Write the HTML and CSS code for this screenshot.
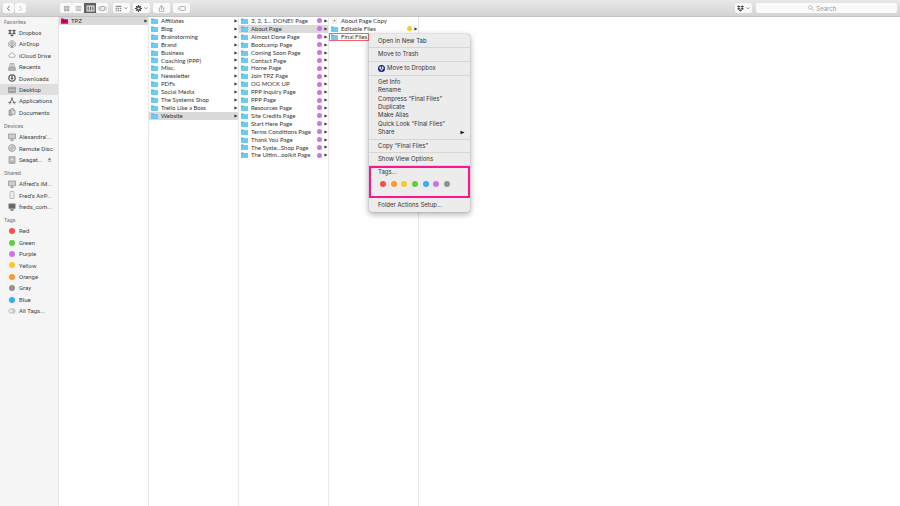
FILE: index.html
```html
<!DOCTYPE html>
<html lang="en">
<head>
  <meta charset="UTF-8">
  <meta name="viewport" content="width=device-width, initial-scale=1">
  <title>Finder</title>
  <link rel="stylesheet" href="styles.css">
</head>
<body>

<svg class="sprite" aria-hidden="true">
  <symbol id="i-left" viewBox="0 0 10 10"><path d="M6.500 1.500 3.500 5l3 3.500" fill="none" stroke="currentColor" stroke-width="1.300"/></symbol>
  <symbol id="i-right" viewBox="0 0 10 10"><path d="M3.500 1.500l3 3.500-3 3.500" fill="none" stroke="currentColor" stroke-width="1.300"/></symbol>
  <symbol id="i-down" viewBox="0 0 10 10"><path d="M1.500 3.500 5 7l3.500-3.500" fill="none" stroke="currentColor" stroke-width="2"/></symbol>
  <symbol id="i-grid" viewBox="0 0 10 10"><path d="M2 2h2.500v2.500H2zM6 2h2.500v2.500H6zM2 6h2.500v2.500H2zM6 6h2.500v2.500H6z" fill="none" stroke="currentColor"/></symbol>
  <symbol id="i-list" viewBox="0 0 10 10"><path d="M1 2h8M1 4h8M1 6h8M1 8h8" stroke="currentColor" stroke-width=".8"/></symbol>
  <symbol id="i-cols" viewBox="0 0 12 10"><path d="M1 1.500h10v7H1zM4.300 1.500v7M7.700 1.500v7" fill="none" stroke="currentColor" stroke-width="1.500"/></symbol>
  <symbol id="i-flow" viewBox="0 0 12 10"><path d="M3.500 2h5v6h-5zM1 2v6M11 2v6" fill="none" stroke="currentColor"/></symbol>
  <symbol id="i-arrange" viewBox="0 0 10 10"><path d="M1 1h8v2H1zM1 4h2v2H1zM4 4h2v2H4zM7 4h2v2H7zM1 7h2v2H1zM4 7h2v2H4zM7 7h2v2H7z" fill="currentColor"/></symbol>
  <symbol id="i-gear" viewBox="0 0 10 10"><circle cx="5" cy="5" r="2.500" fill="none" stroke="currentColor" stroke-width="2"/><path d="M5 0v2M5 8v2M0 5h2M8 5h2M1.500 1.500l1.500 1.500M7 7l1.500 1.500M8.500 1.500 7 3M3 7 1.500 8.500" stroke="currentColor" stroke-width="1.500"/></symbol>
  <symbol id="i-share" viewBox="0 0 10 10"><path d="M3.500 4H2v5.500h6V4H6.500M5 7V1M3 2.500 5 .6l2 1.900" fill="none" stroke="currentColor" stroke-width=".9"/></symbol>
  <symbol id="i-tag" viewBox="0 0 14 10"><path d="M4.500 2H12q1 0 1 1v4q0 1-1 1H4.500L1.500 5z" fill="none" stroke="currentColor"/><circle cx="5" cy="5" r=".8" fill="currentColor"/></symbol>
  <symbol id="i-search" viewBox="0 0 10 10"><circle cx="4" cy="4" r="3" fill="none" stroke="currentColor"/><path d="m6.300 6.300 3 3" stroke="currentColor"/></symbol>
  <symbol id="i-dropbox" viewBox="0 0 12 12"><path d="M3 .8 6 2.700 3 4.600 0 2.700zM9 .8l3 1.900-3 1.900-3-1.900zM3 4.600l3 1.900-3 1.900L0 6.500zM9 4.600l3 1.900-3 1.900-3-1.900zM6 7.700l2.800 1.700L6 11.200 3.200 9.400z" fill="currentColor"/></symbol>
  <symbol id="i-airdrop" viewBox="0 0 12 12"><path d="M3 10.800a5.300 5.300 0 1 1 6 0M4 9a3.300 3.300 0 1 1 4 0M5 7.500a1.500 1.500 0 1 1 2 0" fill="none" stroke="currentColor"/><path d="m6 6.500 2.500 5h-5z" fill="currentColor"/></symbol>
  <symbol id="i-cloud" viewBox="0 0 12 12"><path d="M3 9.500a2.200 2.200 0 0 1-.2-4.300A3.200 3.200 0 0 1 8.800 4.800 2.400 2.400 0 0 1 9 9.500z" fill="none" stroke="currentColor" stroke-width=".9"/></symbol>
  <symbol id="i-recents" viewBox="0 0 12 12"><path d="M3 1h6v6H3zM1 7.500h10V11H1zM1 7.500 2.500 5M11 7.500 9.500 5M4.500 3h3M4.500 5h3" fill="none" stroke="currentColor"/><path d="M1 8h10v3H1z" fill="currentColor" opacity=".5"/></symbol>
  <symbol id="i-download" viewBox="0 0 12 12"><circle cx="6" cy="6" r="4.800" fill="none" stroke="currentColor" stroke-width="1.800"/><path d="M5 3h2v3h1.500L6 9 3.500 6H5z" fill="currentColor"/></symbol>
  <symbol id="i-desktop" viewBox="0 0 12 12"><path d="M.8 2h10.400v8H.8z" fill="#bbb" stroke="currentColor"/><path d="M1 4h10M2.500 8.300h7" stroke="currentColor"/></symbol>
  <symbol id="i-apps" viewBox="0 0 12 12"><path d="M6.700 1 2 11M5.300 1 10 11M.3 8h5M7.500 8h4.200" fill="none" stroke="currentColor" stroke-width="1.200"/></symbol>
  <symbol id="i-docs" viewBox="0 0 12 12"><path d="M1.500 3H6v8H1.500z" fill="#bbb" stroke="currentColor"/><path d="M4.500 1H8l2.500 2.500V9.500h-6zM8 1v3h2.500" fill="#ddd" stroke="currentColor"/></symbol>
  <symbol id="i-imac" viewBox="0 0 12 12"><path d="M.7 1.500h10.600v7H.7z" fill="#ccc" stroke="currentColor"/><path d="M5 9h2v1.500h1.500v1h-5v-1H5z" fill="currentColor"/></symbol>
  <symbol id="i-disc" viewBox="0 0 12 12"><circle cx="6" cy="6" r="5.200" fill="#ccc" stroke="currentColor" stroke-width=".9"/><circle cx="6" cy="6" r="1.600" fill="#f5f5f5" stroke="currentColor" stroke-width=".8"/><path d="m2.500 3 2 2M7.500 7.500l2 2" stroke="#fff"/></symbol>
  <symbol id="i-drive" viewBox="0 0 12 12"><path d="M1.500 1h9v10h-9z" fill="#ccc" stroke="currentColor"/><circle cx="6" cy="5" r="2.600" fill="#eee" stroke="currentColor" stroke-width=".7"/><path d="M3 9.500h6M6 5l2-2" stroke="currentColor" stroke-width=".8"/></symbol>
  <symbol id="i-airport" viewBox="0 0 12 12"><rect x="3" y=".7" width="6" height="10.600" rx="1" fill="#eee" stroke="currentColor" stroke-width=".8"/></symbol>
  <symbol id="i-pc" viewBox="0 0 12 12"><path d="M1.200 1.200h9.600v7H1.200z" fill="#666" stroke="#888"/><path d="M3.500 9.500h5v1.800h-5z" fill="currentColor"/></symbol>
  <symbol id="i-alltags" viewBox="0 0 12 12"><circle cx="7.500" cy="6" r="3.300" fill="#ddd" stroke="#aaa"/><circle cx="4.500" cy="6" r="3.300" fill="#eee" stroke="#aaa"/></symbol>
  <symbol id="i-eject" viewBox="0 0 10 10"><path d="m5 1 3.500 5h-7zM1.500 7.500h7v1.500h-7z" fill="currentColor"/></symbol>
  <symbol id="i-play" viewBox="0 0 10 10"><path d="M1 1.500 9 5 1 8.500z" fill="currentColor"/></symbol>
  <symbol id="i-folder" viewBox="0 0 14 12"><path d="M0 1h5l1 1.500h8V11.500H0z" fill="#4fb9ea"/><path d="M0 4h14v7.500H0z" fill="#6ccbf6"/></symbol>
  <symbol id="i-folder-pink" viewBox="0 0 14 12"><path d="M0 1h5l1 1.500h8V11.500H0z" fill="#d4006a"/><path d="M4 5h6v3H4z" fill="#8d0047"/></symbol>
  <symbol id="i-file" viewBox="0 0 14 12"><path d="M3 .5h8v11H3z" fill="#fff" stroke="#ccc" stroke-width=".8"/><path d="M5.500 4h3v3h-3z" fill="#777"/></symbol>
</svg>

<header class="toolbar">
  <div class="group nav">
    <button class="btn" aria-label="Back"><svg><use href="#i-left"/></svg></button>
    <button class="btn off" aria-label="Forward"><svg><use href="#i-right"/></svg></button>
  </div>
  <div class="group views">
    <button class="btn" aria-label="Icons"><svg><use href="#i-grid"/></svg></button>
    <button class="btn" aria-label="List"><svg><use href="#i-list"/></svg></button>
    <button class="btn active" aria-label="Columns"><svg class="wide"><use href="#i-cols"/></svg></button>
    <button class="btn" aria-label="Gallery"><svg class="wide"><use href="#i-flow"/></svg></button>
  </div>
  <div class="group tools">
    <button class="btn" aria-label="Arrange"><svg><use href="#i-arrange"/></svg><svg class="caret"><use href="#i-down"/></svg></button>
    <button class="btn dark" aria-label="Action"><svg><use href="#i-gear"/></svg><svg class="caret"><use href="#i-down"/></svg></button>
    <button class="btn" aria-label="Share"><svg><use href="#i-share"/></svg></button>
    <button class="btn" aria-label="Edit tags"><svg class="wide"><use href="#i-tag"/></svg></button>
  </div>
  <div class="group end">
    <button class="btn dark" aria-label="Dropbox"><svg><use href="#i-dropbox"/></svg><svg class="caret"><use href="#i-down"/></svg></button>
    <label class="search">
      <svg><use href="#i-search"/></svg>
      <input type="search" placeholder="Search" aria-label="Search">
    </label>
  </div>
</header>

<div class="window">
  <nav class="sidebar">
    <h2>Favorites</h2>
    <a class="dark" href="#dropbox"><svg><use href="#i-dropbox"/></svg><span>Dropbox</span></a>
    <a href="#airdrop"><svg><use href="#i-airdrop"/></svg><span>AirDrop</span></a>
    <a href="#icloud"><svg><use href="#i-cloud"/></svg><span>iCloud Drive</span></a>
    <a href="#recents"><svg><use href="#i-recents"/></svg><span>Recents</span></a>
    <a class="dark" href="#downloads"><svg><use href="#i-download"/></svg><span>Downloads</span></a>
    <a class="selected" href="#desktop"><svg><use href="#i-desktop"/></svg><span>Desktop</span></a>
    <a class="dark" href="#applications"><svg><use href="#i-apps"/></svg><span>Applications</span></a>
    <a href="#documents"><svg><use href="#i-docs"/></svg><span>Documents</span></a>

    <h2>Devices</h2>
    <a href="#alexandra"><svg><use href="#i-imac"/></svg><span>Alexandra’...</span></a>
    <a href="#disc"><svg><use href="#i-disc"/></svg><span>Remote Disc</span></a>
    <a href="#seagate"><svg><use href="#i-drive"/></svg><span>Seagat...</span><svg class="eject"><use href="#i-eject"/></svg></a>

    <h2>Shared</h2>
    <a href="#alfred"><svg><use href="#i-imac"/></svg><span>Alfred’s iM...</span></a>
    <a href="#fred"><svg><use href="#i-airport"/></svg><span>Fred’s AirP...</span></a>
    <a class="dark" href="#freds"><svg><use href="#i-pc"/></svg><span>freds_com...</span></a>

    <h2>Tags</h2>
    <a href="#red"><i class="dot red"></i><span>Red</span></a>
    <a href="#green"><i class="dot green"></i><span>Green</span></a>
    <a href="#purple"><i class="dot purple"></i><span>Purple</span></a>
    <a href="#yellow"><i class="dot yellow"></i><span>Yellow</span></a>
    <a href="#orange"><i class="dot orange"></i><span>Orange</span></a>
    <a href="#gray"><i class="dot gray"></i><span>Gray</span></a>
    <a href="#blue"><i class="dot blue"></i><span>Blue</span></a>
    <a href="#all"><svg><use href="#i-alltags"/></svg><span>All Tags...</span></a>
  </nav>

  <main class="columns" id="columns"></main>
</div>

<div class="menu" role="menu">
  <section><button role="menuitem">Open in New Tab</button></section>
  <section><button role="menuitem">Move to Trash</button></section>
  <section><button role="menuitem" class="with-icon"><span class="badge"><svg><use href="#i-dropbox"/></svg></span>Move to Dropbox</button></section>
  <section>
    <button role="menuitem">Get Info</button>
    <button role="menuitem">Rename</button>
    <button role="menuitem">Compress “Final Files”</button>
    <button role="menuitem">Duplicate</button>
    <button role="menuitem">Make Alias</button>
    <button role="menuitem">Quick Look “Final Files”</button>
    <button role="menuitem" class="submenu">Share<svg><use href="#i-play"/></svg></button>
  </section>
  <section><button role="menuitem">Copy “Final Files”</button></section>
  <section><button role="menuitem">Show View Options</button></section>
  <section class="tags">
    <button role="menuitem">Tags...</button>
    <div class="swatches">
      <button class="dot red" aria-label="Red"></button>
      <button class="dot orange" aria-label="Orange"></button>
      <button class="dot yellow" aria-label="Yellow"></button>
      <button class="dot green" aria-label="Green"></button>
      <button class="dot blue" aria-label="Blue"></button>
      <button class="dot purple" aria-label="Purple"></button>
      <button class="dot gray" aria-label="Gray"></button>
    </div>
  </section>
  <section><button role="menuitem">Folder Actions Setup...</button></section>
</div>

<script>
  const columns = [
    { selected: 'TPZ', icon: 'folder-pink', items: ['TPZ'] },
    { selected: 'Website', items: ['Affiliates', 'Blog', 'Brainstorming', 'Brand', 'Business', 'Coaching (PPP)', 'Misc.', 'Newsletter', 'PDFs', 'Social Media', 'The Systems Shop', 'Trello Like a Boss', 'Website'] },
    { selected: 'About Page', tag: 'purple', items: ['3, 2, 1... DONE!! Page', 'About Page', 'Almost Done Page', 'Bootcamp Page', 'Coming Soon Page', 'Contact Page', 'Home Page', 'Join TPZ Page', 'OG MOCK UP', 'PPP Inquiry Page', 'PPP Page', 'Resources Page', 'Site Credits Page', 'Start Here Page', 'Terms Conditions Page', 'Thank You Page', 'The Syste...Shop Page', 'The Ultim...oolkit Page'] },
    { items: [
      { name: 'About Page Copy', icon: 'file' },
      { name: 'Editable Files', tag: 'yellow' },
      { name: 'Final Files', state: 'target' }
    ] }
  ];

  const root = document.getElementById('columns');
  columns.forEach(col => {
    const el = document.createElement('div');
    el.className = 'column';
    col.items.forEach(entry => {
      const item = typeof entry === 'string' ? { name: entry } : entry;
      const icon = item.icon || col.icon || 'folder';
      const tag = item.tag || col.tag;
      const hasArrow = icon !== 'file' && item.state !== 'target';
      const row = document.createElement('button');
      row.className = 'row ' + (item.name === col.selected ? 'selected' : item.state || '');
      row.innerHTML = `
        <svg class="icon"><use href="#i-${icon}"/></svg>
        <span class="name">${item.name}</span>
        ${tag ? `<i class="dot ${tag}"></i>` : ''}
        ${hasArrow ? '<svg class="arrow"><use href="#i-play"/></svg>' : ''}
      `;
      el.appendChild(row);
    });
    root.appendChild(el);
  });
</script>

</body>
</html>
```

FILE: styles.css
```css
* { box-sizing: border-box; }
body { margin: 0; min-height: 100vh; display: flex; flex-direction: column; font-family: Inter, "Liberation Sans", sans-serif; font-size: 6px; color: #333; background: #fff; }
button { font: inherit; color: inherit; background: none; border: 0; padding: 0; text-align: left; }
svg { flex: none; display: block; }
.sprite { position: absolute; width: 0; height: 0; }

/* toolbar */
.toolbar { display: flex; align-items: center; height: 17px; padding: 0 3px; background: linear-gradient(#e8e8e8, #d3d3d3); border-bottom: 1px solid #c4c4c4; }
.group { display: flex; }
.btn { display: flex; align-items: center; justify-content: center; gap: 2px; height: 10px; color: #8a8a8a; background: #fafafa; border-radius: 2px; }
.btn svg { width: 7px; height: 7px; }
.btn .wide { width: 9px; }
.btn .caret { width: 4px; height: 4px; color: #777; }
.btn.dark { color: #444; }
.btn.active { color: #eee; background: #606060; border-radius: 0; }
.nav { gap: 1px; margin-right: 34px; }
.nav .btn { width: 11px; color: #666; }
.nav .off { color: #bbb; }
.views { margin-right: 5px; }
.views .btn { width: 12px; }
.tools { gap: 3px; }
.tools .btn { width: 17px; }
.end { flex: 1; justify-content: flex-end; gap: 4px; }
.end .btn { width: 17px; }
.search { display: flex; align-items: center; justify-content: center; gap: 2px; width: 20%; height: 10px; background: #fafafa; border-radius: 2px; color: #999; }
.search svg { width: 6px; height: 6px; }
.search input { width: 28px; padding: 0; border: 0; outline: 0; background: none; font: inherit; color: #333; appearance: none; }
.search input::placeholder { color: #999; }
.search input::-webkit-search-cancel-button { display: none; }

/* sidebar */
.window { flex: 1; display: flex; }
.sidebar { width: 59px; flex: none; background: #f5f5f5; border-right: 1px solid #e6e6e6; font-family: Roboto, sans-serif; line-height: 1.9; color: #444; }
.sidebar h2 { margin: 3px 0 0; padding-left: 4px; font-family: Inter, sans-serif; font-size: 5px; font-weight: 500; line-height: 2; color: #777; }
.sidebar h2:first-child { margin-top: 0; }
.sidebar a { display: flex; align-items: center; gap: 3px; padding-left: 8px; color: inherit; text-decoration: none; white-space: nowrap; }
.sidebar a svg { width: 8px; height: 8px; color: #888; }
.sidebar a.dark svg { color: #555; }
.sidebar .selected { background: #dfdfdf; }
.sidebar .dot { margin: 0 1px; }
.sidebar a .eject { width: 5px; height: 5px; margin: 0 6px 0 auto; }

.dot { flex: none; display: block; width: 6px; height: 6px; border-radius: 50%; }
.red { background: #fc4e46; }
.orange { background: #fd9a2b; }
.yellow { background: #fbc92d; }
.green { background: #5bd03c; }
.blue { background: #36adf7; }
.purple { background: #cb74e4; }
.gray { background: #929292; }

/* file columns */
.columns { flex: 1; display: flex; }
.column { width: 90px; border-right: 1px solid #e8e8e8; }
.row { display: flex; align-items: center; width: 100%; padding-left: 2px; font-family: Lato, sans-serif; line-height: 1.32; white-space: nowrap; }
.row.selected { background: #dadada; }
.row.target { width: 45%; outline: 1px solid #f8606c; outline-offset: -1px; }
.row .icon { width: 7px; height: 6px; margin-right: 3px; }
.row .name { flex: 1; }
.row .dot { width: 5px; height: 5px; margin-right: 2px; }
.row .arrow { width: 4px; height: 4px; color: #333; }

/* context menu */
.menu { position: absolute; top: 34px; left: 369px; width: 101px; padding: 1px 0; background: #ececec; border-radius: 3px; box-shadow: 0 0 1px #888, 0 2px 6px rgba(0,0,0,0.35); line-height: 1.4; }
.menu section { padding: 2px 0; border-bottom: 1px solid #d6d6d6; }
.menu section:last-child { padding-top: 3px; border-bottom: 0; }
.menu section > button { display: flex; align-items: center; width: 100%; padding: 0 5px 0 9px; white-space: nowrap; }
.menu .with-icon { height: 9px; gap: 2px; }
.badge { display: flex; align-items: center; justify-content: center; width: 7px; height: 7px; border-radius: 50%; background: #14207c; color: #fff; }
.badge svg { width: 5px; height: 5px; }
.submenu { justify-content: space-between; }
.submenu svg { width: 5px; height: 5px; color: #111; }
.menu .tags { padding: 0 0 9px; border: 2px solid #fb1592; }
.menu .tags > button { padding-left: 7px; }
.swatches { display: flex; justify-content: space-between; padding: 4px 18px 0 9px; }
```
